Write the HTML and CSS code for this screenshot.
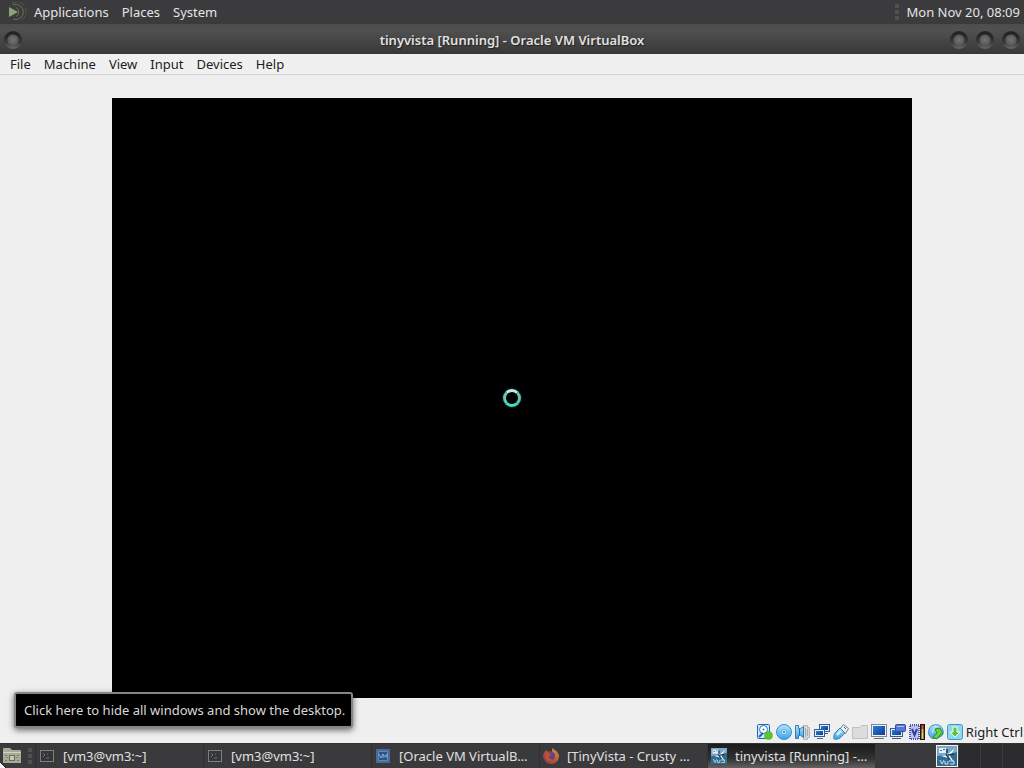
FILE: index.html
```html
<!DOCTYPE html>
<html lang="en">
<head>
  <meta charset="UTF-8">
  <meta name="viewport" content="width=device-width, initial-scale=1.0">
  <title>tinyvista [Running] - Oracle VM VirtualBox</title>
  <link rel="stylesheet" href="styles.css">
</head>
<body>
  <svg class="defs" aria-hidden="true">
    <defs>
      <linearGradient id="blue" x1="0" y1="0" x2="0" y2="1">
        <stop offset="0" stop-color="#b4e4fc"/>
        <stop offset="1" stop-color="#3aa0e4"/>
      </linearGradient>
      <linearGradient id="screen" x1="0" y1="0" x2="1" y2="1">
        <stop offset="0" stop-color="#2a80d4"/>
        <stop offset="1" stop-color="#0c3c94"/>
      </linearGradient>
      <linearGradient id="fox" x1="1" y1="0" x2="0" y2="1">
        <stop offset="0" stop-color="#c8a83c"/>
        <stop offset="0.5" stop-color="#b85438"/>
        <stop offset="1" stop-color="#983058"/>
      </linearGradient>
      <symbol id="terminal" viewBox="0 0 16 16">
        <rect x="1.5" y="2.5" width="13" height="11" fill="#343638" stroke="#7c7f80"/>
        <path d="M4 5l2 2-2 2M7 10h3M8 6h1" fill="none" stroke="#6c7072"/>
      </symbol>
      <symbol id="vista" viewBox="0 0 20 20">
        <rect width="20" height="20" fill="#2f6c94"/>
        <path d="M0 0h20v6L10 9 0 10z" fill="#79a9c6"/>
        <path d="M2 2h7v5H2z" fill="#e4f0f6"/>
        <path d="M3 4h2v1H3zM6 3h2v1H6z" fill="#3d6c88"/>
        <path d="M18 2l-8 7-6 1 7 2 6 4-4-6z" fill="#f4fafc"/>
        <path d="M9 8l4 6M10 3v4M11 9l6-1" stroke="#123c5c" stroke-width="1.5"/>
        <path d="M3 14l2 4 2-4M8 15v3h3v-3M12 15h5v3h-4" fill="none" stroke="#d0e2ec"/>
      </symbol>
    </defs>
  </svg>

  <div class="desktop">
    <header class="panel">
      <nav class="panel-menu">
        <svg class="logo" viewBox="0 0 20 20" aria-hidden="true">
          <path d="M2 5l9 5-9 5z" fill="#8ea274"/>
          <path d="M6 3a7.5 7.5 0 1 1 0 14M9 5.5a5 5 0 0 1 0 9" fill="none" stroke="#667a4e"/>
          <path d="M5 1.5a9 9 0 0 1 14 8.5q0 5-4 8" fill="none" stroke="#566044" stroke-dasharray="6 2"/>
        </svg>
        <button>Applications</button>
        <button>Places</button>
        <button>System</button>
      </nav>
      <div class="clock"><span class="grip"></span><time>Mon Nov 20, 08:09</time></div>
    </header>

    <main class="window">
      <div class="titlebar">
        <button class="knob" aria-label="Window menu"></button>
        <h1>tinyvista [Running] - Oracle VM VirtualBox</h1>
        <div class="controls">
          <button class="knob" aria-label="Minimize"></button>
          <button class="knob" aria-label="Maximize"></button>
          <button class="knob" aria-label="Close"></button>
        </div>
      </div>
      <nav class="menubar">
        <button>File</button>
        <button>Machine</button>
        <button>View</button>
        <button>Input</button>
        <button>Devices</button>
        <button>Help</button>
      </nav>
      <div class="viewport">
        <div class="guest"><span class="spinner"></span></div>
      </div>
      <div class="statusbar">
        <!-- hard disk -->
        <svg viewBox="0 0 16 16"><rect x=".5" y=".5" width="12" height="14" rx="1" fill="#cceafc" stroke="#2464b0"/><circle cx="6.500" cy="5.500" r="4" fill="#fff" stroke="#2876c4"/><circle cx="6.500" cy="5.500" r="1" fill="#2876bc"/><path d="M2 13l4-4" stroke="#2460b0" stroke-width="2"/><circle cx="11.500" cy="11.500" r="4" fill="#5cc828" stroke="#3fa424" stroke-width=".5"/></svg>
        <!-- optical disc -->
        <svg viewBox="0 0 16 16"><circle cx="8" cy="8" r="7.500" fill="url(#blue)" stroke="#3490d4"/><circle cx="8" cy="8" r="2.500" fill="#d8f0fc" stroke="#5cb4ec"/><circle cx="8" cy="8" r="1" fill="#2c70ac"/></svg>
        <!-- audio -->
        <svg viewBox="0 0 16 16"><path d="M8.500 1.500h4v2h2v10h-2v2h-4z" fill="#d6d8da" stroke="#b4b6b8"/><path d="M10.500 4v9M12.500 5v7" stroke="#aaa"/><path d="M.5 1.500h3v3h2l3-2v11l-3-2h-2v3h-3z" fill="url(#blue)" stroke="#387eb6"/><path d="M4.500 5v6" stroke="#2a6ca4"/></svg>
        <!-- network -->
        <svg viewBox="0 0 16 16"><rect x="5.500" y=".5" width="10" height="7" fill="#e4edf8" stroke="#345c98"/><rect x="7" y="2" width="7" height="4" fill="url(#screen)"/><path d="M10 9.500h4" stroke="#555"/><rect x=".5" y="5.500" width="10" height="7" fill="#e4edf8" stroke="#345c98"/><rect x="2" y="7" width="7" height="4" fill="url(#screen)"/><path d="M3 14.500h6" stroke="#666"/></svg>
        <!-- usb -->
        <svg viewBox="0 0 16 16"><path d="M10.500.5l5 4-3 5-5-5z" fill="#f0f0f0" stroke="#708090"/><path d="M11 3l2 2" stroke="#456"/><path d="M7 4l5 5-5 5q-3 2-6 1-1-3 1-6z" fill="url(#blue)" stroke="#3484c4"/><path d="M4 11l4-4" stroke="#e0f4ff" stroke-width="2"/></svg>
        <!-- shared folder -->
        <svg viewBox="0 0 16 16"><path d="M.5 3.500h7l2-2h6v13H.5z" fill="#dcdcdc" stroke="#c0c0c0"/></svg>
        <!-- display -->
        <svg viewBox="0 0 16 16"><rect x=".5" y=".5" width="15" height="12" fill="#f2f6fc" stroke="#7c8894"/><rect x="2" y="2" width="12" height="9" fill="url(#screen)"/><path d="M3 14.500h10" stroke="#6c7074"/></svg>
        <!-- recording -->
        <svg viewBox="0 0 16 16"><rect x=".5" y="4.500" width="12" height="8" fill="#e4eefa" stroke="#345c98"/><path d="M2 14.500h9" stroke="#555"/><rect x="2" y="6" width="9" height="5" fill="url(#screen)"/><rect x="5.500" y=".5" width="10" height="7" rx="1" fill="#5578d4" stroke="#3450a4"/><path d="M7 2.500h7" stroke="#b0c4f4"/></svg>
        <!-- processor -->
        <svg viewBox="0 0 16 16"><rect x="1" y="1" width="9" height="14" fill="#b8c2f0" stroke="#485aac" stroke-width="2" stroke-dasharray="1 1"/><path d="M3 5l2.500 6L8 5" fill="none" stroke="#303c98" stroke-width="2"/><rect x="11" y="0" width="5" height="16" fill="#201810"/><path d="M13.500 1v4" stroke="#e05030" stroke-width="2"/><path d="M13.500 5v4" stroke="#f0b040" stroke-width="2"/><path d="M13.500 9v6" stroke="#e4d470" stroke-width="2"/></svg>
        <!-- mouse integration -->
        <svg viewBox="0 0 16 16"><path d="M4 1.500q6-2 9 1 4 5 1 9-4 4-10 3-4-3-3.500-7Q1 3 4 1.500z" fill="url(#blue)" stroke="#3a8cc4"/><path d="M8 1L4 9" stroke="#d4ecfa"/><path d="M7 5l5-1 3 6-2 0-4 5-4-2 4-4z" fill="#68d43c" stroke="#298c24"/></svg>
        <!-- keyboard capture -->
        <svg viewBox="0 0 16 16"><rect x=".5" y=".5" width="15" height="15" rx="2" fill="#90d8f0" stroke="#3a98c0"/><path d="M6 3h4v5h3l-5 5-5-5h3z" fill="#5cc43c" stroke="#f4fff0"/></svg>
        <span>Right Ctrl</span>
      </div>
    </main>

    <footer class="taskbar">
      <button class="show-desktop" aria-label="Show desktop" aria-describedby="tip">
        <svg viewBox="0 0 20 20" aria-hidden="true"><path d="M1 17V3q0-1 1-1h6l2 2h8q1 0 1 1v12z" fill="#a6aa96"/><path d="M1 6.500h18" stroke="#d0d3c0"/><rect x="7.500" y="9.500" width="5" height="5" fill="#c6c9b6" stroke="#686c5c"/><path d="M3 9.500h2M15 9.500h2M3 14.500h2M15 14.500h2M5 11l1 1M14 12l1-1" stroke="#747868"/></svg>
      </button>
      <span class="grip"></span>
      <div class="tasks">
        <button class="task"><svg viewBox="0 0 16 16"><use href="#terminal"/></svg><span>[vm3@vm3:~]</span></button>
        <button class="task"><svg viewBox="0 0 16 16"><use href="#terminal"/></svg><span>[vm3@vm3:~]</span></button>
        <button class="task">
          <svg viewBox="0 0 16 16"><rect x="1" y="1" width="14" height="14" rx="1" fill="#446c9c"/><path d="M3.500 3.500h9v9h-9z" fill="#2d5284" stroke="#6088b8"/><path d="M4 6l2 4 2-4v4M8 6l2 3 2-3v4" fill="none" stroke="#84a8d0"/></svg>
          <span>[Oracle VM VirtualB…</span>
        </button>
        <button class="task">
          <svg viewBox="0 0 16 16"><path d="M3 2l2 2q2-1 4 0L9 0q6 3 7 8-1 8-8 8-7-1-8-8 1-4 3-6z" fill="url(#fox)"/><circle cx="8" cy="8" r="4" fill="#64408c"/><path d="M2 6q4-2 7 1-3 0-3 2 0 3 4 2-2 3-6 1z" fill="#bc5438"/></svg>
          <span>[TinyVista - Crusty …</span>
        </button>
        <button class="task active"><svg viewBox="0 0 20 20"><use href="#vista"/></svg><span>tinyvista [Running] -…</span></button>
      </div>
      <div class="pager">
        <button class="current" aria-label="Workspace 1"><svg viewBox="0 0 20 20"><use href="#vista"/></svg></button>
        <button aria-label="Workspace 2"></button>
        <button aria-label="Workspace 3"></button>
        <button aria-label="Workspace 4"></button>
      </div>
      <div class="tooltip" id="tip" role="tooltip">Click here to hide all windows and show the desktop.</div>
      <svg class="pointer" viewBox="0 0 6 6" aria-hidden="true"><path d="M0 0l6 6H0z" fill="#f4f4f4"/><path d="M0 0l6 6" stroke="#222"/></svg>
    </footer>
  </div>
</body>
</html>
```
FILE: styles.css
```css
* {
  box-sizing: border-box;
}

body {
  margin: 0;
  font-family: "Noto Sans", sans-serif;
  font-size: 13px;
  line-height: 20px;
  color: #1c1c1c;
  background: #efefef;
}

button {
  padding: 0;
  border: none;
  background: none;
  font: inherit;
  color: inherit;
}

svg {
  display: block;
  flex: none;
}

.defs {
  position: absolute;
  width: 0;
  height: 0;
}

.desktop {
  display: flex;
  flex-direction: column;
  min-height: 100vh;
}

/* top panel */
.panel {
  display: flex;
  justify-content: space-between;
  align-items: center;
  height: 24px;
  padding: 0 4px 0 7px;
  background: #3b3b3d;
  color: #e4e4e4;
}

.panel-menu {
  display: flex;
  align-items: center;
  gap: 13px;
}

.logo {
  width: 20px;
  height: 20px;
  margin-right: -6px;
}

.clock {
  display: flex;
  align-items: center;
  gap: 7px;
}

.grip {
  width: 4px;
  height: 16px;
  background: repeating-linear-gradient(#515153 0 4px, #3b3b3d 4px 6px);
}

/* window */
.window {
  flex: 1;
  display: flex;
  flex-direction: column;
}

.titlebar {
  display: grid;
  grid-template-columns: 1fr auto 1fr;
  align-items: center;
  height: 30px;
  padding: 2px 4px 0;
  background: linear-gradient(#4d4d4d, #505050 20%, #383838);
  color: #e0e0e0;
}

.titlebar h1 {
  margin: 0;
  font-size: 13px;
  font-weight: 600;
  text-shadow: 1px 1px 1px #222;
}

.controls {
  display: flex;
  justify-content: flex-end;
  gap: 8px;
}

.knob {
  width: 18px;
  height: 18px;
  border-radius: 50%;
  background:
    radial-gradient(circle at 50% 50%, #747474, #5a5a5a 5px, transparent 6px),
    linear-gradient(#242424 20%, #383838 60%, #6a6a6a);
}

.menubar {
  display: flex;
  gap: 13px;
  height: 21px;
  padding: 0 10px;
  border-bottom: 1px solid #d4d4d4;
  background: #f0f0f0;
}

.viewport {
  flex: 1;
  display: flex;
  justify-content: center;
  align-items: center;
  padding: 23px 16px;
}

.guest {
  display: flex;
  justify-content: center;
  align-items: center;
  width: 100%;
  max-width: 800px;
  aspect-ratio: 4 / 3;
  background: #000;
}

.spinner {
  width: 18px;
  height: 18px;
  border: 3px solid;
  border-color: #b8ece0 #68c4b0 #40e0c0 #68c8b4;
  border-radius: 50%;
  box-shadow: 0 0 2px #1c6c60;
}

.statusbar {
  display: flex;
  justify-content: flex-end;
  align-items: center;
  gap: 3px;
  height: 22px;
  padding-right: 1px;
}

.statusbar svg {
  width: 16px;
  height: 16px;
}

/* bottom panel */
.taskbar {
  position: relative;
  display: flex;
  align-items: center;
  height: 25px;
  border-top: 1px solid #333;
  background: #3a3a3c;
  color: #e0e0e0;
}

.show-desktop {
  width: 28px;
  padding-left: 2px;
}

.show-desktop svg {
  width: 20px;
  height: 20px;
}

.tasks {
  flex: 1;
  display: flex;
  min-width: 0;
  padding: 0 60px 0 3px;
}

.task {
  flex: 0 1 168px;
  display: flex;
  align-items: center;
  gap: 8px;
  min-width: 0;
  height: 24px;
  padding: 0 3px;
  border-left: 1px solid #323234;
  text-align: left;
}

.task svg {
  width: 16px;
  height: 16px;
}

.task span {
  overflow: hidden;
  white-space: nowrap;
  text-overflow: ellipsis;
}

.task.active {
  background: linear-gradient(#1c1c1c, #303030 60%, #626262);
}

.pager {
  display: flex;
  align-items: center;
}

.pager button {
  width: 22px;
  height: 24px;
  border-left: 1px solid #3c3c3e;
  background: #2c2c2e;
}

.pager .current {
  height: 22px;
  border: 1px solid #f0f0f0;
}

.pager svg {
  width: 20px;
  height: 20px;
}

.tooltip {
  position: absolute;
  left: 14px;
  bottom: 40px;
  padding: 6px 6px 6px 8px;
  border: 2px solid #858585;
  border-radius: 3px;
  background: #000;
  box-shadow: 0 2px 6px rgba(0, 0, 0, 0.6);
  color: #d8d8d8;
}

.pointer {
  position: absolute;
  left: 0;
  bottom: 0;
  width: 6px;
  height: 6px;
}
```
